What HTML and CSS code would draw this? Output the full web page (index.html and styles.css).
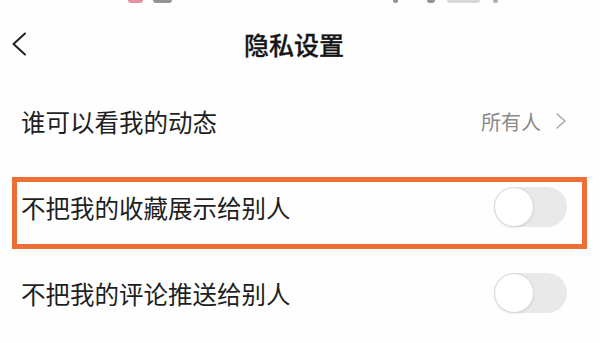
FILE: index.html
```html
<!DOCTYPE html>
<html lang="zh-CN">
<head>
<meta charset="utf-8">
<title>隐私设置</title>
<link rel="stylesheet" href="styles.css">
</head>
<body>
<div class="screen">
  <div class="status">
    <span class="sb sb-red"></span>
    <span class="sb sb-dark"></span>
    <span class="sb sb-r1"></span>
    <span class="sb sb-r2"></span>
    <span class="sb sb-r3"></span>
    <span class="sb sb-r4"></span>
  </div>
  <header class="nav">
    <div class="back">
      <svg width="16" height="24" viewBox="0 0 16 24"><path d="M14 1.5 L2.5 12 L14 22.5" fill="none" stroke="#222" stroke-width="2" stroke-linecap="round" stroke-linejoin="round"/></svg>
    </div>
    <h1 class="title">隐私设置</h1>
    <div class="nav-spacer"></div>
  </header>
  <div class="list">
    <div class="row">
      <span class="label">谁可以看我的动态</span>
      <span class="value">所有人
        <svg class="chev" width="12" height="18" viewBox="0 0 12 18"><path d="M2 2 L10 9 L2 16" fill="none" stroke="#aaa" stroke-width="1.6" stroke-linecap="round" stroke-linejoin="round"/></svg>
      </span>
    </div>
    <div class="row">
      <span class="label">不把我的收藏展示给别人</span>
      <span class="toggle"><span class="knob"></span></span>
    </div>
    <div class="row">
      <span class="label">不把我的评论推送给别人</span>
      <span class="toggle"><span class="knob"></span></span>
    </div>
    <div class="highlight"></div>
  </div>
</div>
</body>
</html>
```
FILE: styles.css
```css
* { box-sizing: border-box; }
html, body {
  margin: 0;
  padding: 0;
  background: #ffffff;
}
body {
  font-family: "Noto Sans CJK SC", "Noto Sans", sans-serif;
  color: #222;
}
.screen {
  width: 600px;
  height: 343px;
  overflow: hidden;
  position: relative;
  background: #fefefe;
}
.status {
  height: 4px;
  display: flex;
  align-items: flex-start;
}
.sb {
  display: block;
  height: 3px;
  border-radius: 0 0 3px 3px;
  opacity: 0.8;
}
.sb-red { margin-left: 128px; width: 15px; background: #e07690; }
.sb-dark { margin-left: 10px; width: 19px; background: #7a7a7a; }
.sb-r1 { margin-left: 221px; width: 5px; background: #777; }
.sb-r2 { margin-left: 29px; width: 8px; background: #777; }
.sb-r3 { margin-left: 12px; width: 33px; background: #cfcfcf; }
.sb-r4 { margin-left: 13px; width: 5px; background: #999; }

.nav {
  height: 74px;
  padding-top: 5px;
  display: flex;
  align-items: center;
}
.back {
  width: 60px;
  padding-left: 11px;
  display: flex;
  align-items: center;
}
.back svg { display: block; }
.title {
  flex: 1;
  margin: 0;
  text-align: center;
  font-size: 25px;
  font-weight: 500;
  color: #151515;
  -webkit-text-stroke: 0.3px #151515;
}
.nav-spacer { width: 72px; }

.list {
  position: relative;
}
.row {
  height: 86px;
  display: flex;
  align-items: center;
  justify-content: space-between;
  padding: 0 33px 0 21px;
}
.label {
  font-size: 24.5px;
  color: #1f1f1f;
}
.value {
  display: flex;
  align-items: center;
  font-size: 20px;
  color: #8a8a8a;
}
.chev {
  display: block;
  margin-left: 14px;
}
.toggle {
  position: relative;
  width: 73px;
  height: 40px;
  border-radius: 20px;
  background: #e9e9e9;
}
.knob {
  position: absolute;
  left: 0;
  top: 0;
  width: 40px;
  height: 40px;
  border-radius: 50%;
  background: #fff;
  border: 1.5px solid #d9d9d9;
  box-shadow: 0 1px 2px rgba(0,0,0,0.08);
}
.highlight {
  position: absolute;
  left: 12px;
  top: 99px;
  width: 575px;
  height: 72px;
  border: 5px solid #ec6f36;
}
```
